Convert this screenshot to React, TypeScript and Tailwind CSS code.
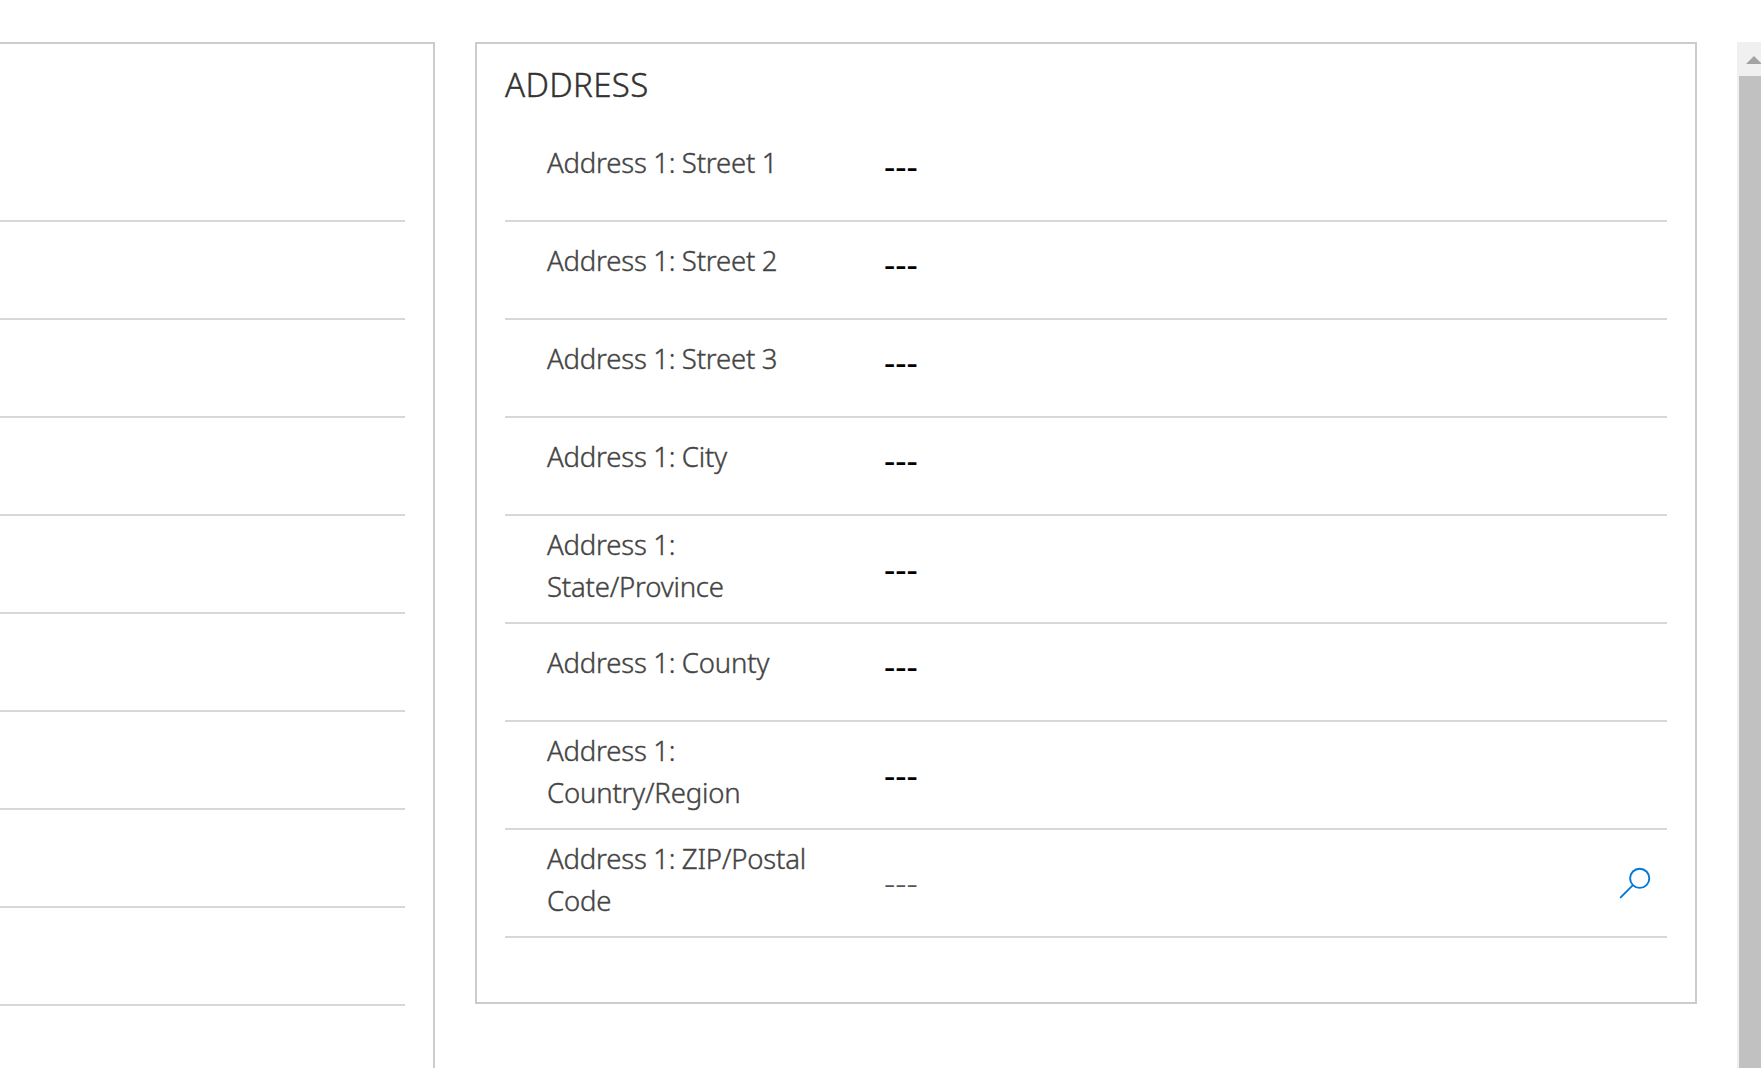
type Field = { label: string[]; lookup?: boolean };

const fields: Field[] = [
  { label: ["Address 1: Street 1"] },
  { label: ["Address 1: Street 2"] },
  { label: ["Address 1: Street 3"] },
  { label: ["Address 1: City"] },
  { label: ["Address 1:", "State/Province"] },
  { label: ["Address 1: County"] },
  { label: ["Address 1:", "Country/Region"] },
  { label: ["Address 1: ZIP/Postal", "Code"], lookup: true },
];

function SearchIcon() {
  return (
    <svg className="mr-4 mt-[37px] h-8 w-8 shrink-0" viewBox="0 0 32 32" fill="none" stroke="#0078d7" strokeWidth="1.9">
      <circle cx="20.7" cy="11.3" r="9.6" />
      <path d="M13.9 18.1 1.2 30.8" />
    </svg>
  );
}

function FieldRow({ label, lookup }: Field) {
  const tall = label.length > 1;
  return (
    <div className={`flex border-b-2 border-[#d8d8d8] pl-[42px] ${tall ? "h-[108px]" : "h-[98px]"}`}>
      <div
        className={`w-[337px] shrink-0 whitespace-nowrap text-[27.5px] leading-[42px] font-light tracking-[-0.18px] text-[#444] [-webkit-text-stroke:0.4px_#444] [word-spacing:-0.4px] ${tall ? "pt-[8px]" : "pt-[18px]"}`}
      >
        {label.map((line) => (
          <div key={line}>{line}</div>
        ))}
      </div>
      <div
        className={`flex-1 text-[35px] leading-[42px] ${tall ? "pt-[32px]" : "pt-[21px]"} ${lookup ? "font-light text-[#555]" : "font-normal text-black"}`}
      >
        ---
      </div>
      {lookup && <SearchIcon />}
    </div>
  );
}

function Scrollbar() {
  return (
    <div className="flex w-6 shrink-0 flex-col overflow-hidden bg-[#f0f0f0]">
      <svg className="h-[34px] w-[34px] shrink-0" viewBox="0 0 34 34" fill="#a3a3a3">
        <path d="M9 22 17 14l8 8z" />
      </svg>
      <div className="ml-0.5 flex-1 bg-[#c1c1c1]" />
    </div>
  );
}

export default function App() {
  return (
    <div className="flex h-[1068px] w-[1761px] overflow-hidden bg-white pt-[42px] font-['Noto_Sans',sans-serif]">
      <section className="w-[435px] shrink-0 border-r-2 border-t-2 border-[#ccc] pr-7 pt-20">
        {Array.from({ length: 9 }, (_, i) => (
          <div key={i} className="h-[98px] border-b-2 border-[#d8d8d8]" />
        ))}
      </section>
      <section className="ml-10 mr-10 h-[962px] w-[1222px] shrink-0 border-2 border-[#ccc] px-7">
        <h2 className="h-20 pt-[18px] text-[33px] leading-[46px] font-light tracking-[0.35px] text-[#333] [-webkit-text-stroke:0.4px_#333]">
          ADDRESS
        </h2>
        {fields.map((field) => (
          <FieldRow key={field.label.join(" ")} {...field} />
        ))}
      </section>
      <Scrollbar />
    </div>
  );
}
